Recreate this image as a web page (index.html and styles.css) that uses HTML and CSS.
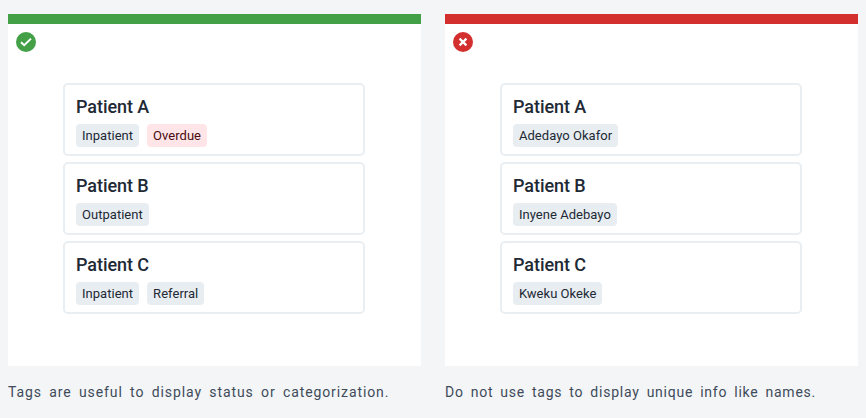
FILE: index.html
```
<!DOCTYPE html>
<html lang="en">
<head>
<meta charset="utf-8">
<title>Tag usage</title>
<link rel="stylesheet" href="styles.css">
</head>
<body>
<main class="examples">
  <figure class="example">
    <div class="panel panel-do">
      <svg class="mark" viewBox="0 0 20 20"><circle cx="10" cy="10" r="10" fill="#43a047"/><path d="M5 10.2 8.2 13.2 15 6.6" fill="none" stroke="#fff" stroke-width="2"/></svg>
      <div class="cards">
        <section class="card"><h2>Patient A</h2><div class="tags"><span class="tag">Inpatient</span><span class="tag tag-negative">Overdue</span></div></section>
        <section class="card"><h2>Patient B</h2><div class="tags"><span class="tag">Outpatient</span></div></section>
        <section class="card"><h2>Patient C</h2><div class="tags"><span class="tag">Inpatient</span><span class="tag">Referral</span></div></section>
      </div>
    </div>
    <figcaption>Tags are useful to display status or categorization.</figcaption>
  </figure>
  <figure class="example">
    <div class="panel panel-dont">
      <svg class="mark" viewBox="0 0 20 20"><circle cx="10" cy="10" r="10" fill="#d32f2f"/><path d="M6.6 6.6 13.4 13.4M13.4 6.6 6.6 13.4" fill="none" stroke="#fff" stroke-width="2.2"/></svg>
      <div class="cards">
        <section class="card"><h2>Patient A</h2><div class="tags"><span class="tag">Adedayo Okafor</span></div></section>
        <section class="card"><h2>Patient B</h2><div class="tags"><span class="tag">Inyene Adebayo</span></div></section>
        <section class="card"><h2>Patient C</h2><div class="tags"><span class="tag">Kweku Okeke</span></div></section>
      </div>
    </div>
    <figcaption class="caption-tight">Do not use tags to display unique info like names.</figcaption>
  </figure>
</main>
</body>
</html>
```
FILE: styles.css
```
* { box-sizing: border-box; }
body {
  margin: 0;
  background: #f3f5f7;
  color: #212934;
  font-family: Roboto, sans-serif;
}
.examples {
  display: grid;
  grid-template-columns: 413px 413px;
  gap: 24px;
  padding: 14px 8px 0;
}
.example { margin: 0; }
.panel {
  height: 352px;
  padding: 8px;
  border-top: 10px solid;
  background: #fff;
}
.panel-do { border-color: #43a047; }
.panel-dont { border-color: #d32f2f; }
.mark { display: block; width: 20px; height: 20px; }
.cards {
  display: grid;
  gap: 6px;
  width: 302px;
  margin: 31px 0 0 47px;
}
.card {
  height: 73px;
  padding: 10px 11px 0;
  border: 2px solid #e9eef2;
  border-radius: 5px;
}
.card h2 {
  margin: 0 0 5px;
  font-size: 18px;
  font-weight: 500;
  line-height: 24px;
  letter-spacing: -0.06px;
}
.tags { display: flex; gap: 8px; }
.tag {
  height: 23px;
  padding: 0 6px;
  border-radius: 4px;
  background: #e8edf2;
  font-size: 13px;
  line-height: 23px;
  letter-spacing: 0.03px;
}
.tag-negative { background: #ffe5e8; color: #4a0b10; }
figcaption {
  margin-top: 16px;
  color: #404b5a;
  font-size: 14px;
  line-height: 20px;
  letter-spacing: 0.9px;
  word-spacing: 3px;
  white-space: nowrap;
}
.caption-tight {
  letter-spacing: 0.76px;
  word-spacing: 2.8px;
}
```
